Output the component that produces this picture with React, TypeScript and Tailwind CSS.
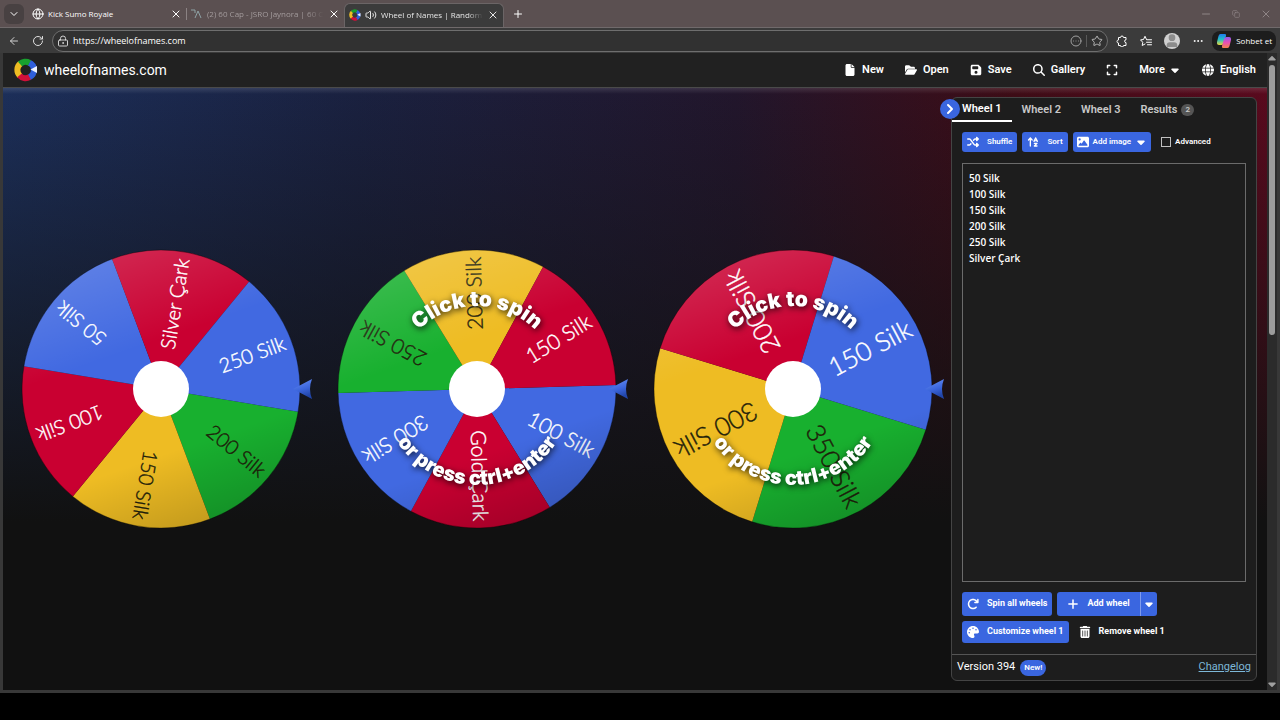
import type { ReactNode } from 'react';
import {
  FaArrowRotateRight,
  FaArrowUpAZ,
  FaCaretDown,
  FaExpand,
  FaFile,
  FaFloppyDisk,
  FaFolderOpen,
  FaGlobe,
  FaImage,
  FaMagnifyingGlass,
  FaPalette,
  FaPlus,
  FaShuffle,
  FaTrashCan,
} from 'react-icons/fa6';
import {
  ArrowLeft,
  ChevronDown,
  ChevronRight,
  CircleEllipsis,
  Copy,
  Ellipsis,
  Globe,
  LockKeyhole,
  Minus,
  Plus,
  RotateCw,
  Star,
  User,
  Volume2,
  X,
} from 'lucide-react';

const BLUE = '#4169e1';
const RED = '#c90031';
const GREEN = '#18b02f';
const YELLOW = '#eebc23';

interface Segment {
  label: string;
  color: string;
}

interface WheelData {
  id: string;
  start: number;
  fontSize: number;
  hint: boolean;
  segments: Segment[];
}

// Segments run clockwise from `start` degrees
const wheels: WheelData[] = [
  {
    id: 'wheel-1',
    start: 9.4,
    fontSize: 20,
    hint: false,
    segments: [
      { label: '200 Silk', color: GREEN },
      { label: '150 Silk', color: YELLOW },
      { label: '100 Silk', color: RED },
      { label: '50 Silk', color: BLUE },
      { label: 'Silver Çark', color: RED },
      { label: '250 Silk', color: BLUE },
    ],
  },
  {
    id: 'wheel-2',
    start: -1.6,
    fontSize: 21,
    hint: true,
    segments: [
      { label: '100 Silk', color: BLUE },
      { label: 'Gold Çark', color: RED },
      { label: '300 Silk', color: BLUE },
      { label: '250 Silk', color: GREEN },
      { label: '200 Silk', color: YELLOW },
      { label: '150 Silk', color: RED },
    ],
  },
  {
    id: 'wheel-3',
    start: 17.1,
    fontSize: 26,
    hint: true,
    segments: [
      { label: '350 Silk', color: GREEN },
      { label: '300 Silk', color: YELLOW },
      { label: '200 Silk', color: RED },
      { label: '150 Silk', color: BLUE },
    ],
  },
];

const entries = ['50 Silk', '100 Silk', '150 Silk', '200 Silk', '250 Silk', 'Silver Çark'];

const RADIUS = 139;

function point(deg: number, r: number) {
  const rad = (deg * Math.PI) / 180;
  return `${(r * Math.cos(rad)).toFixed(2)} ${(r * Math.sin(rad)).toFixed(2)}`;
}

function Wheel({ wheel }: { wheel: WheelData }) {
  const step = 360 / wheel.segments.length;
  return (
    <svg
      viewBox="-158 -158 316 316"
      className="block w-full font-['Lato','Open_Sans',sans-serif]"
      role="img"
      aria-label={wheel.id}
    >
      <defs>
        <linearGradient id={`${wheel.id}-shade`} x1="0.3" y1="0" x2="0.65" y2="1">
          <stop offset="0" stopColor="#fff" stopOpacity="0.16" />
          <stop offset="0.35" stopColor="#fff" stopOpacity="0" />
          <stop offset="0.72" stopColor="#000" stopOpacity="0" />
          <stop offset="1" stopColor="#000" stopOpacity="0.18" />
        </linearGradient>
        <linearGradient id={`${wheel.id}-pointer`} x1="0" y1="0" x2="0.3" y2="1">
          <stop offset="0" stopColor="#6c93f5" />
          <stop offset="0.6" stopColor="#3c66dc" />
          <stop offset="1" stopColor="#2145a8" />
        </linearGradient>
        <path id={`${wheel.id}-top`} d="M -83 0 A 83 83 0 0 1 83 0" />
        <path id={`${wheel.id}-bottom`} d="M -96 0 A 96 96 0 0 0 96 0" />
      </defs>
      {wheel.segments.map((segment, i) => {
        const from = wheel.start + i * step;
        return (
          <path
            key={segment.label}
            d={`M 0 0 L ${point(from, RADIUS)} A ${RADIUS} ${RADIUS} 0 0 1 ${point(from + step, RADIUS)} Z`}
            fill={segment.color}
          />
        );
      })}
      {wheel.segments.map((segment, i) => {
        const dark = segment.color === GREEN || segment.color === YELLOW;
        const ink = dark ? '#1f1e0a' : '#fff';
        return (
          <text
            key={segment.label}
            x="132"
            dy="0.35em"
            textAnchor="end"
            fontSize={wheel.fontSize}
            fontWeight="300"
            fill={ink}
            stroke={ink}
            strokeWidth="0.4"
            transform={`rotate(${wheel.start + (i + 0.5) * step})`}
          >
            {segment.label}
          </text>
        );
      })}
      <circle r={RADIUS} fill={`url(#${wheel.id}-shade)`} stroke="#000" strokeOpacity="0.35" />
      <circle r="28" fill="#fff" />
      {wheel.hint && (
        <g
          className="font-['Inter','Open_Sans',sans-serif] drop-shadow-[1px_2px_3px_rgba(0,0,0,0.8)]"
          fontWeight="900"
          fill="#fff"
          textAnchor="middle"
        >
          <text fontSize="21">
            <textPath href={`#${wheel.id}-top`} startOffset="50%">
              Click to spin
            </textPath>
          </text>
          <text fontSize="20">
            <textPath href={`#${wheel.id}-bottom`} startOffset="50%">
              or press ctrl+enter
            </textPath>
          </text>
        </g>
      )}
      <path d="M 132 0 L 151 -10 Q 147 0 151 10 Z" fill={`url(#${wheel.id}-pointer)`} />
    </svg>
  );
}

function WheelLogo({ className }: { className: string }) {
  return (
    <svg viewBox="0 0 24 24" className={className} aria-hidden="true">
      <g fill="none" strokeWidth="6">
        <path d="M 15 4.6 A 8 8 0 0 1 15 19.4" stroke="#2f5fdc" />
        <path d="M 6.1 17.9 A 8 8 0 0 1 6.5 5.5" stroke="#eebc23" />
        <path d="M 6 6 A 8 8 0 0 1 15.5 4.8" stroke="#18a02f" />
        <path d="M 15.5 19.2 A 8 8 0 0 1 5.5 17.3" stroke="#d0103a" />
      </g>
      <path d="M 16.5 11.5 L 23 8 V 15 Z" fill="#eef3ff" />
    </svg>
  );
}

function CopilotLogo() {
  return (
    <svg viewBox="0 0 16 16" className="size-4" aria-hidden="true">
      <defs>
        <linearGradient id="copilot-left" x1="0" y1="0" x2="0" y2="1">
          <stop offset="0" stopColor="#1f7bf0" />
          <stop offset="0.5" stopColor="#23c1c4" />
          <stop offset="1" stopColor="#e6d53a" />
        </linearGradient>
        <linearGradient id="copilot-right" x1="0" y1="0" x2="0" y2="1">
          <stop offset="0" stopColor="#8f5cf0" />
          <stop offset="0.5" stopColor="#e64fb4" />
          <stop offset="1" stopColor="#f5824a" />
        </linearGradient>
      </defs>
      <path d="M 4.5 1 H 9 Q 10.5 1 10 3 L 8 10 Q 7.3 12 5.5 12 H 3 Q 0.6 12 1 9 L 2.5 3 Q 3 1 4.5 1 Z" fill="url(#copilot-left)" />
      <path d="M 10.5 4 H 13 Q 15.4 4 15 7 L 13.5 13 Q 13 15 11.5 15 H 7 Q 5.5 15 6 13 L 8 6 Q 8.7 4 10.5 4 Z" fill="url(#copilot-right)" />
    </svg>
  );
}

function ExtensionsIcon() {
  return (
    <svg
      viewBox="0 0 12 12"
      className="size-3"
      fill="none"
      stroke="currentColor"
      strokeLinejoin="round"
      aria-hidden="true"
    >
      <path d="M 2.5 2.5 H 4.5 A 1.5 1.5 0 0 1 7.5 2.5 H 10 V 4.8 A 1.4 1.4 0 0 0 10 7.6 V 10.5 H 7.5 A 1.5 1.5 0 0 1 4.5 10.5 H 2.5 V 8 A 1.5 1.5 0 0 1 2.5 5 Z" />
    </svg>
  );
}

function FavoritesIcon() {
  return (
    <svg
      viewBox="0 0 24 24"
      className="size-3"
      fill="none"
      stroke="currentColor"
      strokeWidth="2"
      strokeLinejoin="round"
      strokeLinecap="round"
      aria-hidden="true"
    >
      <path d="M 13 9 L 10 2.5 L 7 9 L 1 9.8 L 5.5 14.5 L 4.4 21 L 10 18" />
      <path d="M 14 9.5 H 23 M 13 14.5 H 23 M 15 19.5 H 23" />
    </svg>
  );
}

function TabStrip() {
  return (
    <div className="flex h-[27px] items-center bg-[#5b5051] text-[8px] text-white">
      <button aria-label="Tab actions" className="ml-1 grid h-5 w-5 place-items-center rounded-md bg-[#484142]">
        <ChevronDown className="size-3" />
      </button>
      <div className="flex w-[162px] items-center gap-1 pl-2">
        <Globe className="size-3 shrink-0" strokeWidth={2} />
        <span className="flex-1 whitespace-nowrap">Kick Sumo Royale</span>
        <button aria-label="Close tab" className="px-1">
          <X className="size-3" />
        </button>
      </div>
      <div className="flex w-[158px] items-center gap-1 border-l border-[#8b8283] pl-1 text-[#a39b9c]">
        <svg viewBox="0 0 12 12" className="size-3 shrink-0" fill="none" stroke="#8fa3a6" aria-hidden="true">
          <path d="M 0 2 H 4 V 5 M 4 10 L 7 3 L 10 10" />
        </svg>
        <span className="min-w-0 flex-1 mask-r-from-85% whitespace-nowrap">(2) 60 Cap - JSRO Jaynora | 60 CA</span>
        <button aria-label="Close tab" className="pr-1 text-white">
          <X className="size-3" />
        </button>
      </div>
      <div className="flex h-6 w-40 items-center gap-1 self-end rounded-t-md border border-b-0 border-[#6b6566] bg-[#3b3b3b] px-1 pb-[2px] text-[#e6e6e6]">
        <WheelLogo className="size-3 shrink-0" />
        <Volume2 className="size-3 shrink-0" strokeWidth={2} />
        <span className="min-w-0 flex-1 mask-r-from-85% whitespace-nowrap">Wheel of Names | Random na</span>
        <button aria-label="Close tab">
          <X className="size-3" />
        </button>
      </div>
      <button aria-label="New tab" className="ml-2">
        <Plus className="size-3" />
      </button>
      <div className="ml-auto flex items-center gap-5 pr-2 text-[#8f8586]">
        <Minus className="size-3" />
        <Copy className="size-2" />
        <X className="size-3" />
      </div>
    </div>
  );
}

function AddressBar() {
  return (
    <div className="flex h-[26px] items-center border-t border-[#706a6b] bg-[#3b3b3b] px-1 text-white">
      <button aria-label="Back" className="px-1">
        <ArrowLeft className="size-3 text-[#d0d0d0]" />
      </button>
      <button aria-label="Reload" className="ml-1 px-1">
        <RotateCw className="size-3 text-[#e0e0e0]" />
      </button>
      <div className="ml-1 flex h-[22px] flex-1 items-center gap-1 rounded-full border border-[#6e6e6e] bg-[#313131] px-1">
        <LockKeyhole className="size-3 text-[#d0d0d0]" />
        <input
          aria-label="Address"
          defaultValue="https://wheelofnames.com"
          className="min-w-0 flex-1 bg-transparent text-[9px] outline-none"
        />
        <CircleEllipsis className="size-3 text-[#a0a0a0]" />
        <span className="h-3 w-px bg-[#5a5a5a]" />
        <Star className="size-3 text-[#b8b8b8]" />
      </div>
      <div className="flex items-center gap-3 pl-2">
        <ExtensionsIcon />
        <FavoritesIcon />
        <span className="grid size-4 place-items-end overflow-hidden rounded-full bg-[#d0d0d0]">
          <User className="size-4 fill-[#8c8c8c] text-[#8c8c8c]" />
        </span>
        <Ellipsis className="size-3" />
      </div>
      <button className="ml-2 flex h-5 items-center gap-1 rounded-lg bg-[#1d1d1d] px-1 text-[8px]">
        <CopilotLogo />
        Sohbet et
      </button>
    </div>
  );
}

function MenuItem({ icon, children }: { icon: ReactNode; children: ReactNode }) {
  return (
    <button className="flex items-center gap-[6px]">
      {icon}
      {children}
    </button>
  );
}

function SiteHeader() {
  return (
    <header className="flex h-[35px] items-center border-b border-[#4a4a4a] bg-[#212121] px-[11px] text-white">
      <a href="#" className="flex items-center gap-[6px] text-[14px]">
        <WheelLogo className="size-6" />
        wheelofnames.com
      </a>
      <nav className="ml-auto flex items-center gap-[21px] text-[11px] font-semibold">
        <MenuItem icon={<FaFile className="size-3" />}>New</MenuItem>
        <MenuItem icon={<FaFolderOpen className="size-3" />}>Open</MenuItem>
        <MenuItem icon={<FaFloppyDisk className="size-3" />}>Save</MenuItem>
        <MenuItem icon={<FaMagnifyingGlass className="size-3" />}>Gallery</MenuItem>
        <button aria-label="Fullscreen">
          <FaExpand className="size-3" />
        </button>
        <button className="flex items-center gap-1">
          More
          <FaCaretDown className="size-3" />
        </button>
        <MenuItem icon={<FaGlobe className="size-3" />}>English</MenuItem>
      </nav>
    </header>
  );
}

function EntriesPanel() {
  return (
    <aside className="relative flex w-[306px] shrink-0 flex-col rounded-md border border-[#444] bg-[#1d1d1d] text-white">
      <button
        aria-label="Hide panel"
        className="absolute top-px -left-3 grid size-5 place-items-center rounded-full bg-[#3a66e0]"
      >
        <ChevronRight className="size-4" strokeWidth={3} />
      </button>
      <div role="tablist" className="flex h-6 text-[11px] font-semibold text-[#c8c8c8]">
        <button role="tab" aria-selected="true" className="border-b-2 border-white px-[10px] text-white">
          Wheel 1
        </button>
        <button role="tab" aria-selected="false" className="px-[10px]">
          Wheel 2
        </button>
        <button role="tab" aria-selected="false" className="px-[10px]">
          Wheel 3
        </button>
        <button role="tab" aria-selected="false" className="flex items-center gap-1 px-[10px]">
          Results
          <span className="rounded-full bg-[#555] px-1 text-[8px] leading-3">2</span>
        </button>
      </div>
      <div className="flex flex-1 flex-col px-[10px] pt-[10px] pb-[11px]">
        <div className="flex h-5 items-stretch gap-[5px] text-[8px] font-semibold">
          <button className="flex items-center gap-2 rounded-[3px] bg-[#3a66e0] px-[5px]">
            <FaShuffle className="size-3" />
            Shuffle
          </button>
          <button className="flex items-center gap-2 rounded-[3px] bg-[#3a66e0] px-[5px]">
            <FaArrowUpAZ className="size-3" />
            Sort
          </button>
          <button className="flex items-center gap-1 rounded-[3px] bg-[#3a66e0] px-[4px]">
            <FaImage className="size-3" />
            Add image
            <FaCaretDown className="size-3" />
          </button>
          <label className="flex items-center gap-1 pl-[5px]">
            <input type="checkbox" className="size-[10px] appearance-none border border-[#c0c0c0]" />
            Advanced
          </label>
        </div>
        <textarea
          aria-label="Entries"
          spellCheck={false}
          defaultValue={entries.join('\n')}
          className="mt-[11px] flex-1 resize-none border border-[#6b6b6b] bg-transparent px-[6px] py-[6px] font-['Open_Sans','Noto_Sans',sans-serif] text-[10px] leading-4 font-semibold outline-none"
        />
        <div className="mt-[10px] flex h-6 gap-[5px] text-[9px] font-bold">
          <button className="flex items-center gap-2 rounded-[3px] bg-[#3a66e0] px-[5px]">
            <FaArrowRotateRight className="size-3" />
            Spin all wheels
          </button>
          <div className="flex">
            <button className="flex items-center gap-2 rounded-l-[3px] bg-[#3a66e0] px-[10px]">
              <FaPlus className="size-3" />
              Add wheel
            </button>
            <button aria-label="More add options" className="rounded-r-[3px] border-l border-[#7f9bec] bg-[#3a66e0] px-[2px]">
              <FaCaretDown className="size-3" />
            </button>
          </div>
        </div>
        <div className="mt-[5px] flex h-[22px] gap-[5px] text-[9px] font-bold">
          <button className="flex items-center gap-2 rounded-[3px] bg-[#3a66e0] px-[5px]">
            <FaPalette className="size-3" />
            Customize wheel 1
          </button>
          <button className="flex items-center gap-2 px-[5px]">
            <FaTrashCan className="size-3" />
            Remove wheel 1
          </button>
        </div>
      </div>
      <footer className="flex h-[26px] items-center gap-[5px] border-t border-[#555] px-[5px] text-[11px]">
        Version 394
        <span className="rounded-full bg-[#3a66e0] px-1 text-[8px] leading-4 font-semibold">New!</span>
        <a href="#" className="ml-auto text-[#7db8d8] underline">
          Changelog
        </a>
      </footer>
    </aside>
  );
}

function ScrollBar() {
  return (
    <div className="flex w-[10px] flex-col items-center bg-[#2b2b2b] text-[#a0a0a0]">
      <FaCaretDown className="size-3 rotate-180" />
      <div className="h-[270px] w-[6px] rounded-full bg-[#9c9c9c]" />
      <FaCaretDown className="mt-auto size-3" />
    </div>
  );
}

export default function App() {
  return (
    <div className="flex h-screen flex-col bg-black font-['Roboto','Liberation_Sans',sans-serif]">
      <div className="font-['Open_Sans','Noto_Sans',sans-serif]">
        <TabStrip />
        <AddressBar />
      </div>
      <div className="mb-[27px] flex min-h-0 flex-1 border-x-3 border-b-3 border-[#383838]">
        <div className="flex min-w-0 flex-1 flex-col">
          <SiteHeader />
          <main className="flex min-h-0 flex-1 bg-[linear-gradient(to_bottom,rgba(255,255,255,0.12),transparent_6px),linear-gradient(to_bottom,transparent,#111_72%),linear-gradient(to_right,#1c2f5a,#1a2140_28%,#22162c_58%,#3e0c16_80%,#5a0a1e)] pt-[9px] pr-[10px] pb-[9px]">
            <div className="grid min-w-0 flex-1 grid-cols-3 items-center">
              {wheels.map(wheel => (
                <Wheel key={wheel.id} wheel={wheel} />
              ))}
            </div>
            <EntriesPanel />
          </main>
        </div>
        <ScrollBar />
      </div>
    </div>
  );
}
